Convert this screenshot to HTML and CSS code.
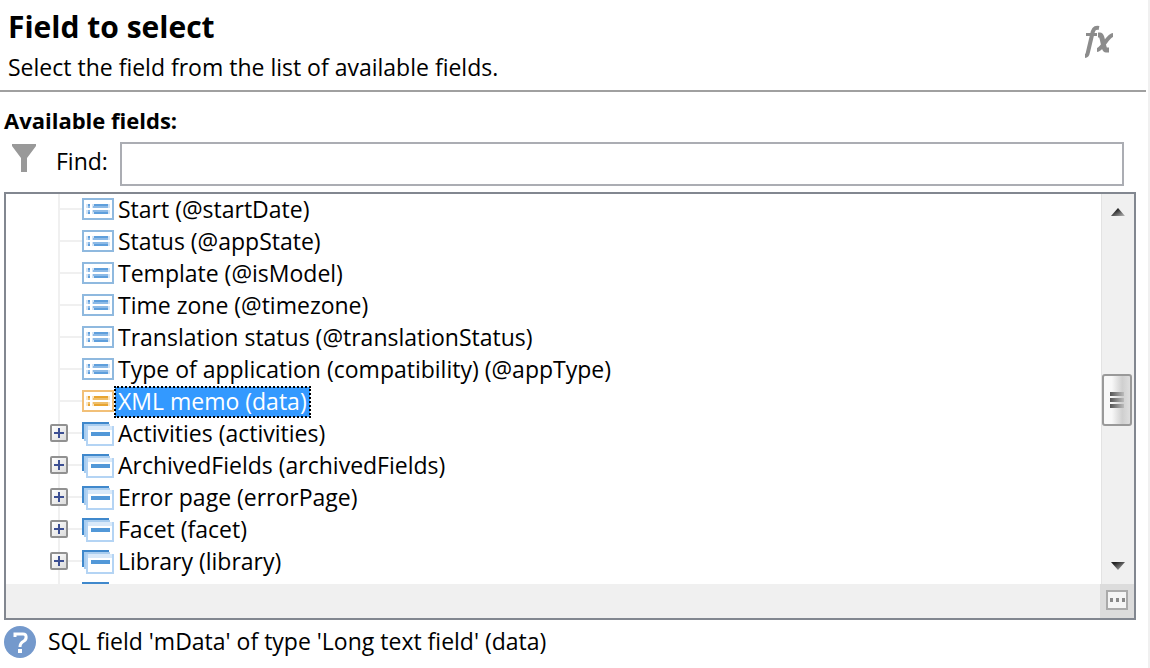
FILE: index.html
```html
<!DOCTYPE html>
<html lang="en">

<head>
  <meta charset="UTF-8">
  <meta name="viewport" content="width=device-width, initial-scale=1.0">
  <title>Field to select</title>
  <link rel="stylesheet" href="styles.css">
</head>

<body>
  <!-- shared icons -->
  <svg class="symbols" width="0" height="0" aria-hidden="true">
    <symbol id="icon-field" viewBox="0 0 32 22">
      <rect class="frame" x="1" y="1" width="30" height="20" />
      <path class="soft" d="M4 6h4v4H4zM10 6h18v4H10zM4 12h4v4H4zM10 12h18v4H10z" />
      <path class="bar" d="M6 6h2v2H6zM12 6h14v2H12zM6 14h2v2H6zM12 14h14v2H12z" />
      <path class="bar" opacity=".6" d="M6 8h2v2H6zM11 8h15v2H11zM6 12h2v2H6zM11 12h15v2H11z" />
    </symbol>
    <symbol id="icon-link" viewBox="0 0 32 24">
      <path fill="#3f88cc" d="M0 0h27v2H2v15H0z" />
      <path fill="#a9cdef" d="M2 2h26v2H4v15H2z" />
      <rect x="5" y="5" width="26" height="18" fill="#fff" stroke="#b4d4f4" stroke-width="2" />
      <path fill="#d9e9f9" d="M6 4h24v4H6z" />
      <path fill="#5298d8" d="M9 10h19v4H9z" />
    </symbol>
  </svg>

  <div class="dialog">
    <header class="header">
      <div>
        <h1>Field to select</h1>
        <p>Select the field from the list of available fields.</p>
      </div>
      <svg class="fx" width="30" height="34" viewBox="0 0 30 34" aria-hidden="true">
        <g fill="none" stroke="#8c8c8c">
          <path stroke-width="4" d="M15 3c-5-1-6 2-7 7L4 27c-.5 3-1.500 4-3 4" />
          <path stroke-width="3" d="M2 9.500h11" />
          <path stroke-width="5" d="M14 10h2c3 0 3 15 6 15h3" />
          <path stroke-width="4" d="M29 10c-5 0-11 15-16 15" />
        </g>
      </svg>
    </header>

    <main class="content">
      <h2>Available fields:</h2>

      <div class="search">
        <svg width="26" height="28" viewBox="0 0 26 28" aria-hidden="true">
          <path fill="#999" d="M0 0h24v2l-9 12v14H9V14L0 2z" />
        </svg>
        <label for="find">Find:</label>
        <input type="text" id="find">
      </div>

      <div class="list-box">
        <div class="view">
          <ul class="tree">
            <li><span class="branch"></span><svg class="field"><use href="#icon-field" /></svg><span class="name">Start (@startDate)</span></li>
            <li><span class="branch"></span><svg class="field"><use href="#icon-field" /></svg><span class="name">Status (@appState)</span></li>
            <li><span class="branch"></span><svg class="field"><use href="#icon-field" /></svg><span class="name">Template (@isModel)</span></li>
            <li><span class="branch"></span><svg class="field"><use href="#icon-field" /></svg><span class="name">Time zone (@timezone)</span></li>
            <li><span class="branch"></span><svg class="field"><use href="#icon-field" /></svg><span class="name">Translation status (@translationStatus)</span></li>
            <li><span class="branch"></span><svg class="field"><use href="#icon-field" /></svg><span class="name">Type of application (compatibility) (@appType)</span></li>
            <li class="selected"><span class="branch"></span><svg class="field memo"><use href="#icon-field" /></svg><span class="name">XML memo (data)</span></li>
            <li><span class="branch"><button type="button" aria-label="Expand Activities"></button></span><svg class="link"><use href="#icon-link" /></svg><span class="name">Activities (activities)</span></li>
            <li><span class="branch"><button type="button" aria-label="Expand ArchivedFields"></button></span><svg class="link"><use href="#icon-link" /></svg><span class="name">ArchivedFields (archivedFields)</span></li>
            <li><span class="branch"><button type="button" aria-label="Expand Error page"></button></span><svg class="link"><use href="#icon-link" /></svg><span class="name">Error page (errorPage)</span></li>
            <li><span class="branch"><button type="button" aria-label="Expand Facet"></button></span><svg class="link"><use href="#icon-link" /></svg><span class="name">Facet (facet)</span></li>
            <li><span class="branch"><button type="button" aria-label="Expand Library"></button></span><svg class="link"><use href="#icon-link" /></svg><span class="name">Library (library)</span></li>
            <li><span class="branch"></span><svg class="link"><use href="#icon-link" /></svg></li>
          </ul>

          <div class="scrollbar">
            <button type="button" class="arrow" aria-label="Scroll up">
              <svg width="14" height="8" viewBox="0 0 14 8"><path fill="url(#up)" d="M7 0l7 8H0z" />
                <linearGradient id="up" x2="1" y2="1"><stop offset=".3" stop-color="#222" /><stop offset="1" stop-color="#bbb" /></linearGradient>
              </svg>
            </button>
            <span class="track-before"></span>
            <button type="button" class="thumb" aria-label="Scroll position"><i></i><i></i><i></i></button>
            <span class="track-after"></span>
            <button type="button" class="arrow" aria-label="Scroll down">
              <svg width="14" height="8" viewBox="0 0 14 8"><path fill="url(#down)" d="M0 0h14L7 8z" />
                <linearGradient id="down" x2="1" y2="1"><stop offset=".2" stop-color="#222" /><stop offset="1" stop-color="#bbb" /></linearGradient>
              </svg>
            </button>
          </div>
        </div>

        <div class="bottom-bar">
          <button type="button" class="more" aria-label="More"><i></i><i></i><i></i></button>
        </div>
      </div>

      <div class="hint">
        <svg width="32" height="32" viewBox="0 0 32 32" aria-hidden="true">
          <circle cx="16" cy="16" r="16" fill="#7499cc" />
          <path fill="none" stroke="#fff" stroke-width="3" d="M11 11V8h8c4 0 4 5 1 7-2 1-4 2-4 6" />
          <path fill="#fff" d="M14 23h4v4h-4z" />
        </svg>
        <span>SQL field 'mData' of type 'Long text field' (data)</span>
      </div>
    </main>
  </div>
</body>

</html>
```
FILE: styles.css
```css
* {
  margin: 0;
  padding: 0;
  box-sizing: border-box;
}

body {
  background-color: #fff;
  color: #000;
  font: 23px/30px "Open Sans", "Noto Sans", sans-serif;
}

ul {
  list-style: none;
}

button {
  border: 0;
  background: none;
}

.symbols {
  position: absolute;
}

.dialog {
  min-height: 100vh;
  border-right: 2px solid #f0f0f0;
}

.header {
  display: flex;
  justify-content: space-between;
  height: 92px;
  margin-right: 2px;
  padding: 7px 32px 0 8px;
  border-bottom: 2px solid #a0a0a0;
}

h1 {
  font-size: 30px;
  line-height: 40px;
}

.header p {
  line-height: 40px;
}

.fx {
  margin-top: 18px;
}

.content {
  padding: 14px 12px 0 4px;
}

h2 {
  font-size: 22px;
  line-height: 28px;
}

.search {
  display: flex;
  margin: 8px 12px 6px 8px;
}

.search svg {
  margin-top: 2px;
}

.search label {
  width: 64px;
  margin-left: 18px;
  line-height: 38px;
}

.search input {
  flex: 1;
  height: 44px;
  padding: 0 8px;
  border: 2px solid #abadb3;
  font: inherit;
}

/* tree of fields */
.list-box {
  border: 2px solid #828790;
}

.view {
  display: flex;
  height: 390px;
}

.tree {
  flex: 1;
  overflow: hidden;
}

.tree li {
  display: flex;
  height: 32px;
}

.branch {
  flex: none;
  width: 24px;
  height: 32px;
  margin-left: 52px;
  border-left: 2px solid #f0f0f0;
  background: linear-gradient(#f0f0f0, #f0f0f0) 0 14px / 100% 2px no-repeat;
}

.branch button {
  display: block;
  width: 18px;
  height: 18px;
  margin: 6px 0 0 -10px;
  border: 2px solid #919191;
  border-radius: 2px;
  background:
    linear-gradient(#3c4f93, #3c4f93) center / 10px 2px no-repeat,
    linear-gradient(#3c4f93, #3c4f93) center / 2px 10px no-repeat,
    linear-gradient(135deg, #fff, #dcdcdc);
}

.tree svg {
  flex: none;
  width: 32px;
  margin-top: 4px;
}

.field {
  height: 22px;
  --frame: #8fb9df;
  --soft: #d3e4f6;
  --bar: #5f9fdc;
}

.memo {
  --frame: #f2c078;
  --soft: #fbe6c4;
  --bar: #e8a531;
}

.frame {
  fill: #fff;
  stroke: var(--frame);
  stroke-width: 2;
}

.soft {
  fill: var(--soft);
}

.bar {
  fill: var(--bar);
}

.link {
  height: 24px;
}

.name {
  margin-left: 1px;
  padding: 0 3px;
  white-space: nowrap;
}

.selected .name {
  height: 30px;
  margin-top: 1px;
  line-height: 28px;
  background-color: #3399ff;
  color: #fff;
  outline: 2px dotted #000;
  outline-offset: -1px;
}

/* scrollbar */
.scrollbar {
  display: flex;
  flex-direction: column;
  width: 33px;
  background-color: #f0f0f0;
  border-left: 1px solid #e3e3e3;
}

.arrow {
  height: 36px;
}

.arrow svg {
  display: block;
  margin: 0 auto;
}

.track-before {
  flex: 144;
}

.track-after {
  flex: 122;
}

.thumb {
  display: flex;
  flex-direction: column;
  justify-content: center;
  gap: 2px;
  height: 52px;
  margin-right: 2px;
  padding-left: 6px;
  border: 2px solid #999;
  border-radius: 3px;
  background: linear-gradient(90deg, #f8f8f8 30%, #cfcfcf 70%, #dedede);
}

.thumb i {
  width: 14px;
  height: 4px;
  background: linear-gradient(90deg, #555, #bbb);
}

.bottom-bar {
  display: flex;
  justify-content: flex-end;
  height: 34px;
  background-color: #f0f0f0;
}

.more {
  display: flex;
  align-items: center;
  justify-content: center;
  gap: 3px;
  width: 34px;
  border: solid #dcdcdc;
  border-width: 6px 6px 8px;
  background-color: #f4f4f4;
  box-shadow: inset 0 0 0 2px #aaa;
}

.more i {
  width: 3px;
  height: 4px;
  background-color: #888;
}

.hint {
  display: flex;
  gap: 12px;
  margin-top: 6px;
}
```
